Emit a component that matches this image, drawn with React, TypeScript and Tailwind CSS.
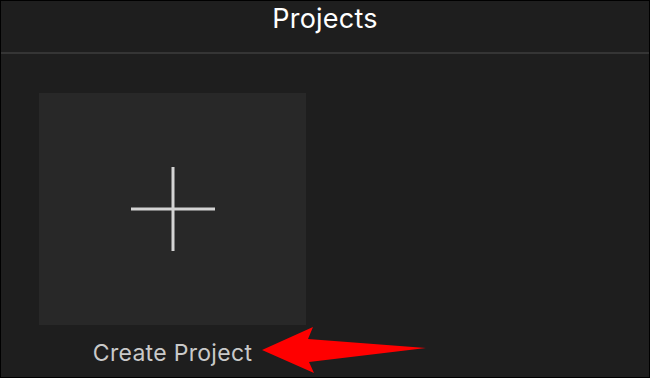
import React from 'react';

// Red annotation arrow pointing at the "Create Project" label
const Arrow = () => (
    <svg
        className="absolute left-0 top-0 pointer-events-none"
        width="650"
        height="378"
        viewBox="0 0 650 378"
    >
        <polygon
            points="261,349 312,326 307,338 425,347 308,361 313,372"
            fill="#ff0000"
        />
    </svg>
);

const PlusIcon = () => (
    <svg width="84" height="84" viewBox="0 0 84 84">
        <rect x="40.5" y="0" width="3" height="84" fill="#d4d4d4" />
        <rect x="0" y="40.5" width="84" height="3" fill="#d4d4d4" />
    </svg>
);

export default function App() {
    return (
        <div
            className="relative w-[650px] h-[378px] border border-black bg-[#1e1e1e] overflow-hidden"
            style={{ fontFamily: 'Inter, "Noto Sans", sans-serif' }}
        >
            {/* Header */}
            <div className="h-[53px] flex justify-center pt-[4px] border-b-2 border-[#353535]">
                <h1 className="text-[27px] text-white leading-none tracking-[0.2px]">Projects</h1>
            </div>

            {/* Project grid */}
            <div className="pl-[38px] pt-[39px]">
                <div className="w-[267px] flex flex-col items-center">
                    <button className="w-[267px] h-[232px] bg-[#282828] flex items-center justify-center">
                        <PlusIcon />
                    </button>
                    <span className="mt-[17px] text-[23px] leading-none tracking-[0.3px] text-[#c9c9c9]">Create Project</span>
                </div>
            </div>

            <Arrow />
        </div>
    );
}
